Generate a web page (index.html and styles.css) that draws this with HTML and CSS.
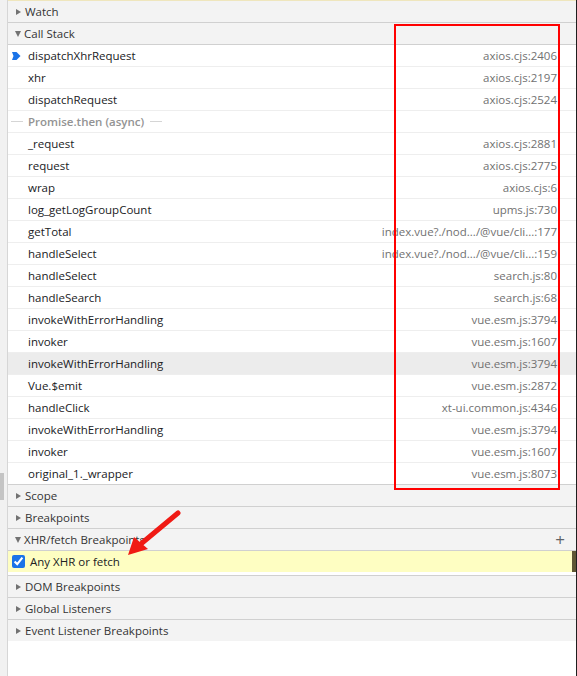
FILE: index.html
```html
<!DOCTYPE html>
<html>
<head>
<meta charset="utf-8">
<link rel="stylesheet" href="styles.css">
</head>
<body>
<div class="app">
  <div class="gutter"><div class="thumb"></div></div>
  <div class="panel">
    <div class="topline"></div>
    <div class="hdr"><span class="tri right"></span><span>Watch</span></div>
    <div class="hdr"><span class="tri down"></span><span>Call Stack</span></div>
    <div class="frames">
      <div class="row"><svg class="cur" width="9" height="10" viewBox="0 0 9 10"><path d="M0 1 H4.5 L8.5 5 L4.5 9 H0 L1.5 5 Z" fill="#1a73e8"/></svg><span class="fn">dispatchXhrRequest</span><span class="loc">axios.cjs:2406</span></div>
      <div class="row"><span class="fn">xhr</span><span class="loc">axios.cjs:2197</span></div>
      <div class="row"><span class="fn">dispatchRequest</span><span class="loc">axios.cjs:2524</span></div>
      <div class="row async"><span class="ln l"></span><span class="atext">Promise.then (async)</span><span class="ln r"></span></div>
      <div class="row"><span class="fn">_request</span><span class="loc">axios.cjs:2881</span></div>
      <div class="row"><span class="fn">request</span><span class="loc">axios.cjs:2775</span></div>
      <div class="row"><span class="fn">wrap</span><span class="loc">axios.cjs:6</span></div>
      <div class="row"><span class="fn">log_getLogGroupCount</span><span class="loc">upms.js:730</span></div>
      <div class="row"><span class="fn">getTotal</span><span class="loc">index.vue?./nod.../@vue/cli...:177</span></div>
      <div class="row"><span class="fn">handleSelect</span><span class="loc">index.vue?./nod.../@vue/cli...:159</span></div>
      <div class="row"><span class="fn">handleSelect</span><span class="loc">search.js:80</span></div>
      <div class="row"><span class="fn">handleSearch</span><span class="loc">search.js:68</span></div>
      <div class="row"><span class="fn">invokeWithErrorHandling</span><span class="loc">vue.esm.js:3794</span></div>
      <div class="row"><span class="fn">invoker</span><span class="loc">vue.esm.js:1607</span></div>
      <div class="row hover"><span class="fn">invokeWithErrorHandling</span><span class="loc">vue.esm.js:3794</span></div>
      <div class="row"><span class="fn">Vue.$emit</span><span class="loc">vue.esm.js:2872</span></div>
      <div class="row"><span class="fn">handleClick</span><span class="loc">xt-ui.common.js:4346</span></div>
      <div class="row"><span class="fn">invokeWithErrorHandling</span><span class="loc">vue.esm.js:3794</span></div>
      <div class="row"><span class="fn">invoker</span><span class="loc">vue.esm.js:1607</span></div>
      <div class="row last"><span class="fn">original_1._wrapper</span><span class="loc">vue.esm.js:8073</span></div>
    </div>
    <div class="hdr"><span class="tri right"></span><span>Scope</span></div>
    <div class="hdr"><span class="tri right"></span><span>Breakpoints</span></div>
    <div class="hdr"><span class="tri down"></span><span class="grow">XHR/fetch Breakpoints</span><span class="plus">+</span></div>
    <div class="xhr"><input type="checkbox" class="cb" checked><span>Any XHR or fetch</span></div>
    <div class="gap"></div>
    <div class="hdr top"><span class="tri right"></span><span>DOM Breakpoints</span></div>
    <div class="hdr top"><span class="tri right"></span><span>Global Listeners</span></div>
    <div class="hdr top nob"><span class="tri right"></span><span>Event Listener Breakpoints</span></div>
  </div>
  <div class="redbox"></div>
  <svg class="arrow" width="70" height="60" viewBox="0 0 70 60">
    <line x1="58" y1="3" x2="22" y2="33" stroke="#f01a14" stroke-width="5" stroke-linecap="round"/>
    <polygon points="8,45 14,27 28,39" fill="#f01a14"/>
  </svg>
</div>
</body>
</html>
```
FILE: styles.css
```css
html, body {
  margin: 0;
  padding: 0;
  background: #ffffff;
}
body {
  font-family: "Open Sans", "Noto Sans", sans-serif;
  font-size: 11.5px;
  color: #202124;
}
.app {
  position: relative;
  display: flex;
  width: 577px;
  height: 676px;
  overflow: hidden;
}
.gutter {
  width: 7px;
  flex: none;
  background: #f1f1f1;
  border-right: 1px solid #d6d6d6;
}
.thumb {
  margin-top: 473px;
  width: 4px;
  height: 27px;
  background: #c4c4c4;
}
.panel {
  flex: 1;
  display: flex;
  flex-direction: column;
  border-right: 1px solid #1e1e1e;
  min-width: 0;
}
.topline {
  height: 1px;
  background: #efe6bd;
}
.hdr {
  height: 21px;
  display: flex;
  align-items: center;
  background: #f3f3f3;
  border-bottom: 1px solid #d0d0d0;
  color: #333333;
  padding-left: 7px;
  padding-right: 11px;
  flex: none;
}
.hdr.top {
  border-bottom: none;
  border-top: 1px solid #d0d0d0;
}
.tri {
  width: 0;
  height: 0;
}
.tri.right {
  margin-left: 1px;
  border-top: 3.5px solid transparent;
  border-bottom: 3.5px solid transparent;
  border-left: 5px solid #727272;
  margin-right: 4px;
}
.tri.down {
  border-left: 3.5px solid transparent;
  border-right: 3.5px solid transparent;
  border-top: 6px solid #727272;
  margin-right: 3px;
}
.grow {
  flex: 1;
}
.plus {
  font-size: 17px;
  color: #5f6368;
  line-height: 1;
}
.frames {
  display: flex;
  flex-direction: column;
}
.row {
  position: relative;
  height: 21px;
  display: flex;
  align-items: center;
  border-bottom: 1px solid #eeeeee;
  padding-left: 20px;
  padding-right: 19px;
  flex: none;
}
.row.last {
  border-bottom: 1px solid #d0d0d0;
}
.row.hover {
  background: #ececec;
}
.cur {
  position: absolute;
  left: 4px;
  top: 6px;
}
.fn {
  flex: 1;
  white-space: nowrap;
}
.loc {
  color: #717171;
  white-space: nowrap;
}
.row.async {
  padding-left: 3px;
}
.ln {
  height: 1px;
  background: #d5d5d5;
}
.ln.l {
  width: 12px;
  margin-right: 5px;
}
.ln.r {
  width: 12px;
  margin-left: 6px;
}
.atext {
  color: #939393;
  font-weight: 600;
}
.xhr {
  height: 21px;
  display: flex;
  align-items: center;
  background: #fefec2;
  border-right: 4px solid #5e5634;
  padding-left: 4px;
  flex: none;
}
.cb {
  width: 13px;
  height: 13px;
  margin: 0 5px 0 0;
  accent-color: #1a73e8;
}
.gap {
  height: 3px;
  flex: none;
}
.redbox {
  position: absolute;
  left: 394px;
  top: 24px;
  width: 162px;
  height: 462px;
  border: 2px solid #ff0000;
}
.arrow {
  position: absolute;
  left: 120px;
  top: 510px;
}
```
